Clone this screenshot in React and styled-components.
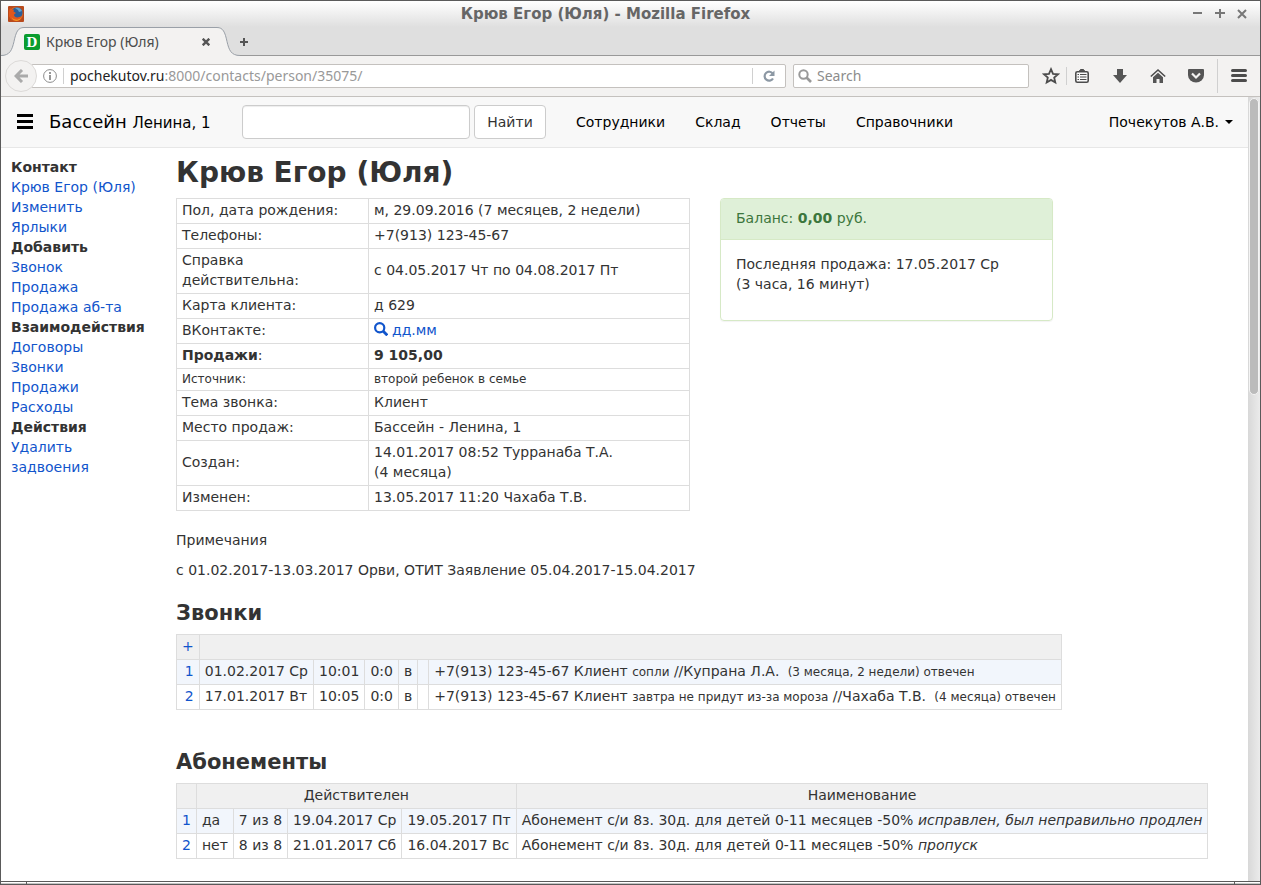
import React from 'react'
import styled, { createGlobalStyle } from 'styled-components'

const GlobalStyle = createGlobalStyle`
  * {
    box-sizing: border-box;
  }
  body {
    margin: 0;
    color: #333;
    background: #fff;
    font-family: "DejaVu Sans", sans-serif;
    font-size: 14px;
    line-height: 20px;
  }
  button, input {
    font: inherit;
  }
`

/* browser window */

const Window = styled.div`
  display: flex;
  flex-direction: column;
  min-height: 100vh;
  border: 1px solid #5a5a5a;
`

const TitleBar = styled.div`
  display: flex;
  align-items: center;
  height: 26px;
  padding: 0 7px;
  background: linear-gradient(#fff, #dfdfdf);
`

const WindowTitle = styled.div`
  flex: 1;
  color: #666;
  font-size: 15px;
  font-weight: bold;
  text-align: center;
`

const IconButton = styled.button`
  display: flex;
  align-items: center;
  justify-content: center;
  flex: none;
  width: ${(props) => props.$width || 22}px;
  height: 22px;
  padding: 0;
  border: 0;
  background: none;
`

const TabBar = styled.div`
  display: flex;
  align-items: center;
  height: 29px;
  background: linear-gradient(#999, #999) bottom / 100% 1px no-repeat #dfdfdf;
`

const Tab = styled.div`
  display: flex;
  flex: none;
  align-items: center;
  gap: 6px;
  width: 193px;
  height: 29px;
  color: #4c4c4c;
  font-family: "Noto Sans", sans-serif;
  background: #f3f2f1;
  border-top: 1px solid #9aa0a8;
`

const TabEdge = styled.svg`
  flex: none;
  width: 23px;
  height: 29px;
`

const TabTitle = styled.span`
  flex: 1;
`

const Favicon = styled.span`
  width: 16px;
  height: 16px;
  border-radius: 2px;
  color: #fff;
  background: #0a9c2f;
  font: bold 15px/16px "Liberation Serif", serif;
  text-align: center;
`

const Toolbar = styled.div`
  display: flex;
  align-items: center;
  height: 41px;
  padding: 0 10px 0 4px;
  background: #f3f2f1;
  border-bottom: 1px solid #c4c1be;
`

const BackButton = styled.button`
  display: flex;
  align-items: center;
  justify-content: center;
  flex: none;
  width: 32px;
  height: 32px;
  margin-right: -6px;
  padding: 0;
  border: 1px solid #dcdad8;
  border-radius: 50%;
  background: #f3f2f1;
  z-index: 1;
`

const UrlBar = styled.div`
  display: flex;
  flex: 1;
  align-items: center;
  gap: 6px;
  height: 24px;
  padding-left: 11px;
  border: 1px solid #c4c1be;
  border-radius: 2px;
  background: #fff;
`

const Url = styled.div`
  flex: 1;
  color: #999;
  font-family: "Noto Sans", sans-serif;
`

const Host = styled.span`
  color: #222;
`

const Divider = styled.span`
  flex: none;
  width: 1px;
  height: ${(props) => props.$height}px;
  margin: 0 ${(props) => props.$space || 0}px;
  background: ${(props) => (props.$dark ? '#5a5a5a' : '#d0d0d0')};
`

const SearchBar = styled.label`
  display: flex;
  align-items: center;
  width: 236px;
  height: 24px;
  margin: 0 11px 0 7px;
  padding-left: 4px;
  border: 1px solid #c4c1be;
  border-radius: 2px;
  background: #fff;
`

const SearchInput = styled.input`
  flex: 1;
  min-width: 0;
  padding: 0 5px;
  border: 0;
  outline: 0;
  background: none;
  font-family: "Noto Sans", sans-serif;
  &::placeholder {
    color: #8c8c8c;
    opacity: 1;
  }
`

const Tools = styled.div`
  display: flex;
  align-items: center;
  gap: 16px;
`

const ToolPair = styled.div`
  display: flex;
  align-items: center;
  gap: 4px;
`

const Viewport = styled.div`
  display: flex;
  flex: 1;
`

const Scrollbar = styled.div`
  flex: none;
  width: 12px;
  padding: 1px;
  background: linear-gradient(to right, #d8d8d8, #ebebeb);
`

const Thumb = styled.div`
  height: 38%;
  border: 1px solid #f4f4f4;
  border-radius: 5px;
  background: #bbb;
`

const StatusBar = styled.div`
  display: flex;
  justify-content: space-between;
  height: 3px;
  padding: 0 25px;
  border-top: 1px solid #5a5a5a;
  background: linear-gradient(#fff 1px, #c4c4c4 1px);
`

/* page */

const Page = styled.div`
  flex: 1;
  min-width: 0;
`

const Navbar = styled.nav`
  display: flex;
  align-items: center;
  height: 51px;
  padding: 0 15px;
  color: #000;
  background: #f8f8f8;
  border-bottom: 1px solid #e7e7e7;
`

const Brand = styled.a`
  flex: none;
  width: 208px;
  padding-left: 15px;
  color: #000;
  font-size: 18px;
  text-decoration: none;
  white-space: nowrap;
  small {
    font-size: 15px;
  }
`

const Search = styled.form`
  display: flex;
  gap: 4px;
  margin-right: 30px;
`

const Field = styled.input`
  width: 228px;
  height: 34px;
  padding: 6px 12px;
  border: 1px solid #ccc;
  border-radius: 4px;
  background: #fff;
  box-shadow: inset 0 1px 1px rgba(0, 0, 0, 0.075);
`

const Submit = styled.button`
  min-width: 72px;
  height: 34px;
  padding: 0 12px;
  border: 1px solid #ccc;
  border-radius: 4px;
  color: #333;
  background: #fff;
`

const Menu = styled.div`
  display: flex;
  flex: 1;
  gap: 30px;
`

const MenuLink = styled.a`
  color: #000;
  text-decoration: none;
`

const UserButton = styled.button`
  display: flex;
  align-items: center;
  gap: 6px;
  padding: 0;
  border: 0;
  color: #000;
  background: none;
`

const Caret = styled.span`
  border: 4px solid transparent;
  border-top-color: #000;
  border-bottom: 0;
`

const Body = styled.div`
  display: flex;
  padding: 9px 14px 20px 10px;
`

const Sidebar = styled.aside`
  display: flex;
  flex: none;
  flex-direction: column;
  width: 165px;
`

const Link = styled.a`
  color: #15c;
  text-decoration: none;
`

const Main = styled.main`
  flex: 1;
  min-width: 0;
`

const Title = styled.h1`
  margin: 0 0 9px;
  font-size: 28px;
  line-height: 32px;
`

const Heading = styled.h2`
  margin: 0 0 8px;
  font-size: 21px;
  line-height: 26px;
`

const Row = styled.div`
  display: grid;
  grid-template-columns: repeat(12, 1fr);
  gap: 30px;
  align-items: start;
  margin-bottom: 19px;
`

const Table = styled.table`
  border-collapse: collapse;
  margin-bottom: ${(props) => props.$gap || 0}px;
  th, td {
    padding: 1px 5px 3px;
    border: 1px solid #ddd;
    font-weight: normal;
    text-align: left;
  }
`

const ListTable = styled(Table)`
  white-space: nowrap;
  thead th, thead td {
    background: #f0f0f0;
    text-align: center;
  }
  tbody tr:nth-child(odd) td {
    background: #f2f6fc;
  }
  small {
    font-size: 12px;
    line-height: 12px;
  }
`

const InfoTable = styled(Table)`
  grid-column: span 6;
  width: 100%;
  table-layout: fixed;
  th {
    width: 192px;
  }
`

const InfoRow = styled.tr`
  font-size: ${(props) => (props.$small ? 12 : 14)}px;
  line-height: ${(props) => (props.$small ? 17 : 20)}px;
  && > * {
    padding: ${(props) => (props.$small ? '2px 5px' : '1px 5px 3px')};
  }
`

const NumberCell = styled.td`
  && {
    text-align: right;
  }
`

const Panel = styled.section`
  grid-column: span 4;
  border: 1px solid #d6e9c6;
  border-radius: 4px;
  box-shadow: 0 1px 1px rgba(0, 0, 0, 0.05);
`

const PanelHead = styled.div`
  padding: 9px 15px 11px;
  border-bottom: 1px solid #d6e9c6;
  border-radius: 3px 3px 0 0;
  color: #3c763d;
  background: #dff0d8;
`

const PanelBody = styled.div`
  padding: 14px 15px 26px;
`

const Note = styled.p`
  margin: 0 0 ${(props) => props.$gap || 10}px;
`

const SearchGlyph = styled.svg`
  width: 14px;
  height: 14px;
  margin-right: 4px;
  vertical-align: -1px;
`

const sections = [
  { title: 'Контакт', links: ['Крюв Егор (Юля)', 'Изменить', 'Ярлыки'] },
  { title: 'Добавить', links: ['Звонок', 'Продажа', 'Продажа аб-та'] },
  { title: 'Взаимодействия', links: ['Договоры', 'Звонки', 'Продажи', 'Расходы'] },
  { title: 'Действия', links: ['Удалить', 'задвоения'] },
]

const info = [
  { label: 'Пол, дата рождения:', value: 'м, 29.09.2016 (7 месяцев, 2 недели)' },
  { label: 'Телефоны:', value: '+7(913) 123-45-67' },
  { label: 'Справка действительна:', value: 'с 04.05.2017 Чт по 04.08.2017 Пт' },
  { label: 'Карта клиента:', value: 'д 629' },
  {
    label: 'ВКонтакте:',
    value: (
      <Link href="#vk">
        <SearchGlyph viewBox="0 0 14 14" fill="none" stroke="#15c">
          <circle cx="5.7" cy="5.7" r="4.6" strokeWidth="2.2" />
          <path d="M9 9l4.300 4.300" strokeWidth="2.8" />
        </SearchGlyph>
        дд.мм
      </Link>
    ),
  },
  { label: <><b>Продажи</b>:</>, value: <b>9 105,00</b> },
  { label: 'Источник:', value: 'второй ребенок в семье', small: true },
  { label: 'Тема звонка:', value: 'Клиент' },
  { label: 'Место продаж:', value: 'Бассейн - Ленина, 1' },
  { label: 'Создан:', value: <>14.01.2017 08:52 Турранаба Т.А.<br />(4 месяца)</> },
  { label: 'Изменен:', value: '13.05.2017 11:20 Чахаба Т.В.' },
]

const calls = [
  { date: '01.02.2017 Ср', time: '10:01', note: 'сопли', who: 'Купрана Л.А.', ago: '3 месяца, 2 недели' },
  { date: '17.01.2017 Вт', time: '10:05', note: 'завтра не придут из-за мороза', who: 'Чахаба Т.В.', ago: '4 месяца' },
]

const passes = [
  { active: 'да', used: '7 из 8', from: '19.04.2017 Ср', to: '19.05.2017 Пт', comment: 'исправлен, был неправильно продлен' },
  { active: 'нет', used: '8 из 8', from: '21.01.2017 Сб', to: '16.04.2017 Вс', comment: 'пропуск' },
]

function FirefoxLogo() {
  return (
    <svg width="16" height="16" viewBox="0 0 16 16">
      <rect width="16" height="16" rx="1" fill="#b84a1c" />
      <circle cx="8" cy="8" r="7" fill="#e8681c" />
      <circle cx="9" cy="6.8" r="5.6" fill="#2c5f98" />
      <path d="M7 2c3-1 6 0 7 3l-3 1-1-2z" fill="#5fa3cf" />
      <path d="M2 2l2 2 2-.5-.5 2L8 7l-2 1.500c0 3 4 4 7 1.500-1 4-5 5-8 4-4-1-5-7-3-12z" fill="#e2571b" />
      <path d="M3 10c1 4 7 5 10 2-2 4-8 4-10-2z" fill="#f6a623" />
    </svg>
  )
}

function TitleRow() {
  return (
    <TitleBar>
      <FirefoxLogo />
      <WindowTitle>Крюв Егор (Юля) - Mozilla Firefox</WindowTitle>
      <IconButton aria-label="Свернуть">
        <svg width="10" height="10" stroke="#777" strokeWidth="2"><path d="M0 4h9" /></svg>
      </IconButton>
      <IconButton aria-label="Развернуть">
        <svg width="10" height="10" stroke="#777" strokeWidth="2"><path d="M0 4h10M5-1v10" overflow="visible" /></svg>
      </IconButton>
      <IconButton aria-label="Закрыть">
        <svg width="10" height="10" stroke="#777" strokeWidth="2"><path d="M1 1l8 8M9 1l-8 8" /></svg>
      </IconButton>
    </TitleBar>
  )
}

function Tabs() {
  return (
    <TabBar>
      <TabEdge viewBox="0 0 23 29">
        <path d="M0 28.500C9 28.500 11 23 13 14.500C15 5 17 .5 23 .5V29H0z" fill="#f3f2f1" />
        <path d="M0 28.500C9 28.500 11 23 13 14.500C15 5 17 .5 23 .5" fill="none" stroke="#9aa0a8" />
      </TabEdge>
      <Tab>
        <Favicon>D</Favicon>
        <TabTitle>Крюв Егор (Юля)</TabTitle>
        <IconButton aria-label="Закрыть вкладку">
          <svg width="8" height="8" stroke="#555" strokeWidth="2.400"><path d="M.7.700l6.600 6.600M7.300.700L.7 7.300" /></svg>
        </IconButton>
      </Tab>
      <TabEdge viewBox="0 0 23 29">
        <path d="M0 .5C6 .5 8 5 10 14.500C12 23 14 28.500 23 28.500V29H0z" fill="#f3f2f1" />
        <path d="M0 .5C6 .5 8 5 10 14.500C12 23 14 28.500 23 28.500" fill="none" stroke="#9aa0a8" />
      </TabEdge>
      <IconButton aria-label="Новая вкладка" $width={8}>
        <svg width="8" height="8" stroke="#555" strokeWidth="2"><path d="M0 4h8M4 0v8" /></svg>
      </IconButton>
    </TabBar>
  )
}

function BrowserToolbar() {
  return (
    <Toolbar>
      <BackButton aria-label="Назад">
        <svg width="14" height="14" fill="none" stroke="#aaa" strokeWidth="3">
          <path d="M8 1L2 7l6 6M2.500 7H14" />
        </svg>
      </BackButton>
      <UrlBar>
        <svg width="14" height="14" fill="none" stroke="#8c8c8c">
          <circle cx="7" cy="7" r="6.400" />
          <path d="M7 6v5M7 3v2" strokeWidth="1.800" />
        </svg>
        <Divider $height={16} />
        <Url><Host>pochekutov.ru</Host>:8000/contacts/person/35075/</Url>
        <Divider $height={16} />
        <IconButton aria-label="Обновить" $width={26}>
          <svg width="18" height="12" fill="none" stroke="#8c98a4">
            <path d="M9.800 3.600A4.500 4.500 0 1 0 10 8.500" strokeWidth="2.200" />
            <path d="M11.500.5v5.500H6z" fill="#8c98a4" stroke="none" />
          </svg>
        </IconButton>
      </UrlBar>
      <SearchBar>
        <svg width="14" height="14" fill="none" stroke="#999">
          <circle cx="5.500" cy="5.500" r="4.200" strokeWidth="2" />
          <path d="M8.500 8.500l4.500 4.500" strokeWidth="2.600" />
        </svg>
        <SearchInput aria-label="Search" placeholder="Search" />
      </SearchBar>
      <Tools>
        <ToolPair>
          <IconButton aria-label="Закладка">
            <svg width="18" height="18" fill="none" stroke="#4c4c4c" strokeWidth="1.800">
              <path d="M9 2.200l2 4.600 5 .5-3.800 3.300 1.100 4.900L9 12.900l-4.300 2.600 1.100-4.900L2 7.300l5-.5z" />
            </svg>
          </IconButton>
          <Divider $height={18} />
          <IconButton aria-label="Список закладок">
            <svg width="16" height="16">
              <path d="M5 3.500l1.500-2h3l1.500 2" fill="#555" stroke="#4c4c4c" />
              <rect x="1.800" y="3.800" width="12.400" height="10.400" rx="1.500" fill="#f9f9f9" stroke="#4c4c4c" strokeWidth="1.600" />
              <path d="M3.500 6.500H5M6 6.500h6.500M3.500 9H5M6 9h6.500M3.500 11.500H5M6 11.500h6.500" stroke="#4c4c4c" strokeWidth="1.200" />
            </svg>
          </IconButton>
        </ToolPair>
        <IconButton aria-label="Загрузки">
          <svg width="14" height="16"><path d="M4 1h6v6h4l-7 8-7-8h4z" fill="#555" /></svg>
        </IconButton>
        <IconButton aria-label="Домой">
          <svg width="16" height="16">
            <path d="M.8 8.500L8 2l7.200 6.500" fill="none" stroke="#4c4c4c" strokeWidth="1.600" />
            <path d="M8 4.800l5 4.500V15H9.500v-4h-3v4H3V9.300z" fill="#555" />
          </svg>
        </IconButton>
        <IconButton aria-label="Pocket">
          <svg width="16" height="16">
            <path d="M1 1h14q1 0 1 1v5a8 7.500 0 0 1-16 0V2q0-1 1-1z" fill="#555" />
            <path d="M4 5.500l4 4 4-4" fill="none" stroke="#f3f2f1" strokeWidth="2.200" />
          </svg>
        </IconButton>
      </Tools>
      <Divider $height={34} $space={10} />
      <IconButton aria-label="Меню">
        <svg width="16" height="14" stroke="#4c4c4c" strokeWidth="3" strokeLinecap="round"><path d="M1.500 1.500h13M1.500 6.500h13M1.500 11.500h13" /></svg>
      </IconButton>
    </Toolbar>
  )
}

function PageNav() {
  return (
    <Navbar>
      <IconButton aria-label="Разделы" $width={18}>
        <svg width="16" height="16" fill="#000">
          <path d="M0 0h16v3H0zM0 6h16v3H0zM0 12h16v3H0z" />
        </svg>
      </IconButton>
      <Brand href="#home">Бассейн <small>Ленина, 1</small></Brand>
      <Search onSubmit={(e) => e.preventDefault()}>
        <Field aria-label="Поиск" />
        <Submit type="submit">Найти</Submit>
      </Search>
      <Menu>
        <MenuLink href="#staff">Сотрудники</MenuLink>
        <MenuLink href="#stock">Склад</MenuLink>
        <MenuLink href="#reports">Отчеты</MenuLink>
        <MenuLink href="#refs">Справочники</MenuLink>
      </Menu>
      <UserButton>Почекутов А.В.<Caret /></UserButton>
    </Navbar>
  )
}

function App() {
  return (
    <>
      <GlobalStyle />
      <Window>
        <TitleRow />
        <Tabs />
        <BrowserToolbar />
        <Viewport>
          <Page>
            <PageNav />
            <Body>
              <Sidebar>
                {sections.map((section) => (
                  <React.Fragment key={section.title}>
                    <b>{section.title}</b>
                    {section.links.map((link) => (
                      <Link href="#" key={link}>{link}</Link>
                    ))}
                  </React.Fragment>
                ))}
              </Sidebar>
              <Main>
                <Title>Крюв Егор (Юля)</Title>
                <Row>
                  <InfoTable>
                    <tbody>
                      {info.map((item, i) => (
                        <InfoRow key={i} $small={item.small}>
                          <th scope="row">{item.label}</th>
                          <td>{item.value}</td>
                        </InfoRow>
                      ))}
                    </tbody>
                  </InfoTable>
                  <Panel>
                    <PanelHead>Баланс: <b>0,00</b> руб.</PanelHead>
                    <PanelBody>
                      Последняя продажа: 17.05.2017 Ср<br />
                      (3 часа, 16 минут)
                    </PanelBody>
                  </Panel>
                </Row>
                <Note>Примечания</Note>
                <Note $gap={20}>с 01.02.2017-13.03.2017 Орви, ОТИТ Заявление 05.04.2017-15.04.2017</Note>
                <Heading>Звонки</Heading>
                <ListTable $gap={39}>
                  <thead>
                    <tr>
                      <th><Link href="#add">+</Link></th>
                      <td colSpan={6} />
                    </tr>
                  </thead>
                  <tbody>
                    {calls.map((call, i) => (
                      <tr key={call.date}>
                        <NumberCell><Link href="#call">{i + 1}</Link></NumberCell>
                        <td>{call.date}</td>
                        <td>{call.time}</td>
                        <td>0:0</td>
                        <td>в</td>
                        <td />
                        <td>
                          +7(913) 123-45-67 Клиент <small>{call.note}</small> //{call.who}{' '}
                          <small>&nbsp;({call.ago}) отвечен</small>
                        </td>
                      </tr>
                    ))}
                  </tbody>
                </ListTable>
                <Heading>Абонементы</Heading>
                <ListTable>
                  <thead>
                    <tr>
                      <td />
                      <th colSpan={4}>Действителен</th>
                      <th>Наименование</th>
                    </tr>
                  </thead>
                  <tbody>
                    {passes.map((pass, i) => (
                      <tr key={pass.from}>
                        <NumberCell><Link href="#pass">{i + 1}</Link></NumberCell>
                        <td>{pass.active}</td>
                        <td>{pass.used}</td>
                        <td>{pass.from}</td>
                        <td>{pass.to}</td>
                        <td>Абонемент с/и 8з. 30д. для детей 0-11 месяцев -50% <i>{pass.comment}</i></td>
                      </tr>
                    ))}
                  </tbody>
                </ListTable>
              </Main>
            </Body>
          </Page>
          <Scrollbar><Thumb /></Scrollbar>
        </Viewport>
        <StatusBar>
          <Divider $height={2} $dark />
          <Divider $height={2} $dark />
        </StatusBar>
      </Window>
    </>
  )
}

export default App
